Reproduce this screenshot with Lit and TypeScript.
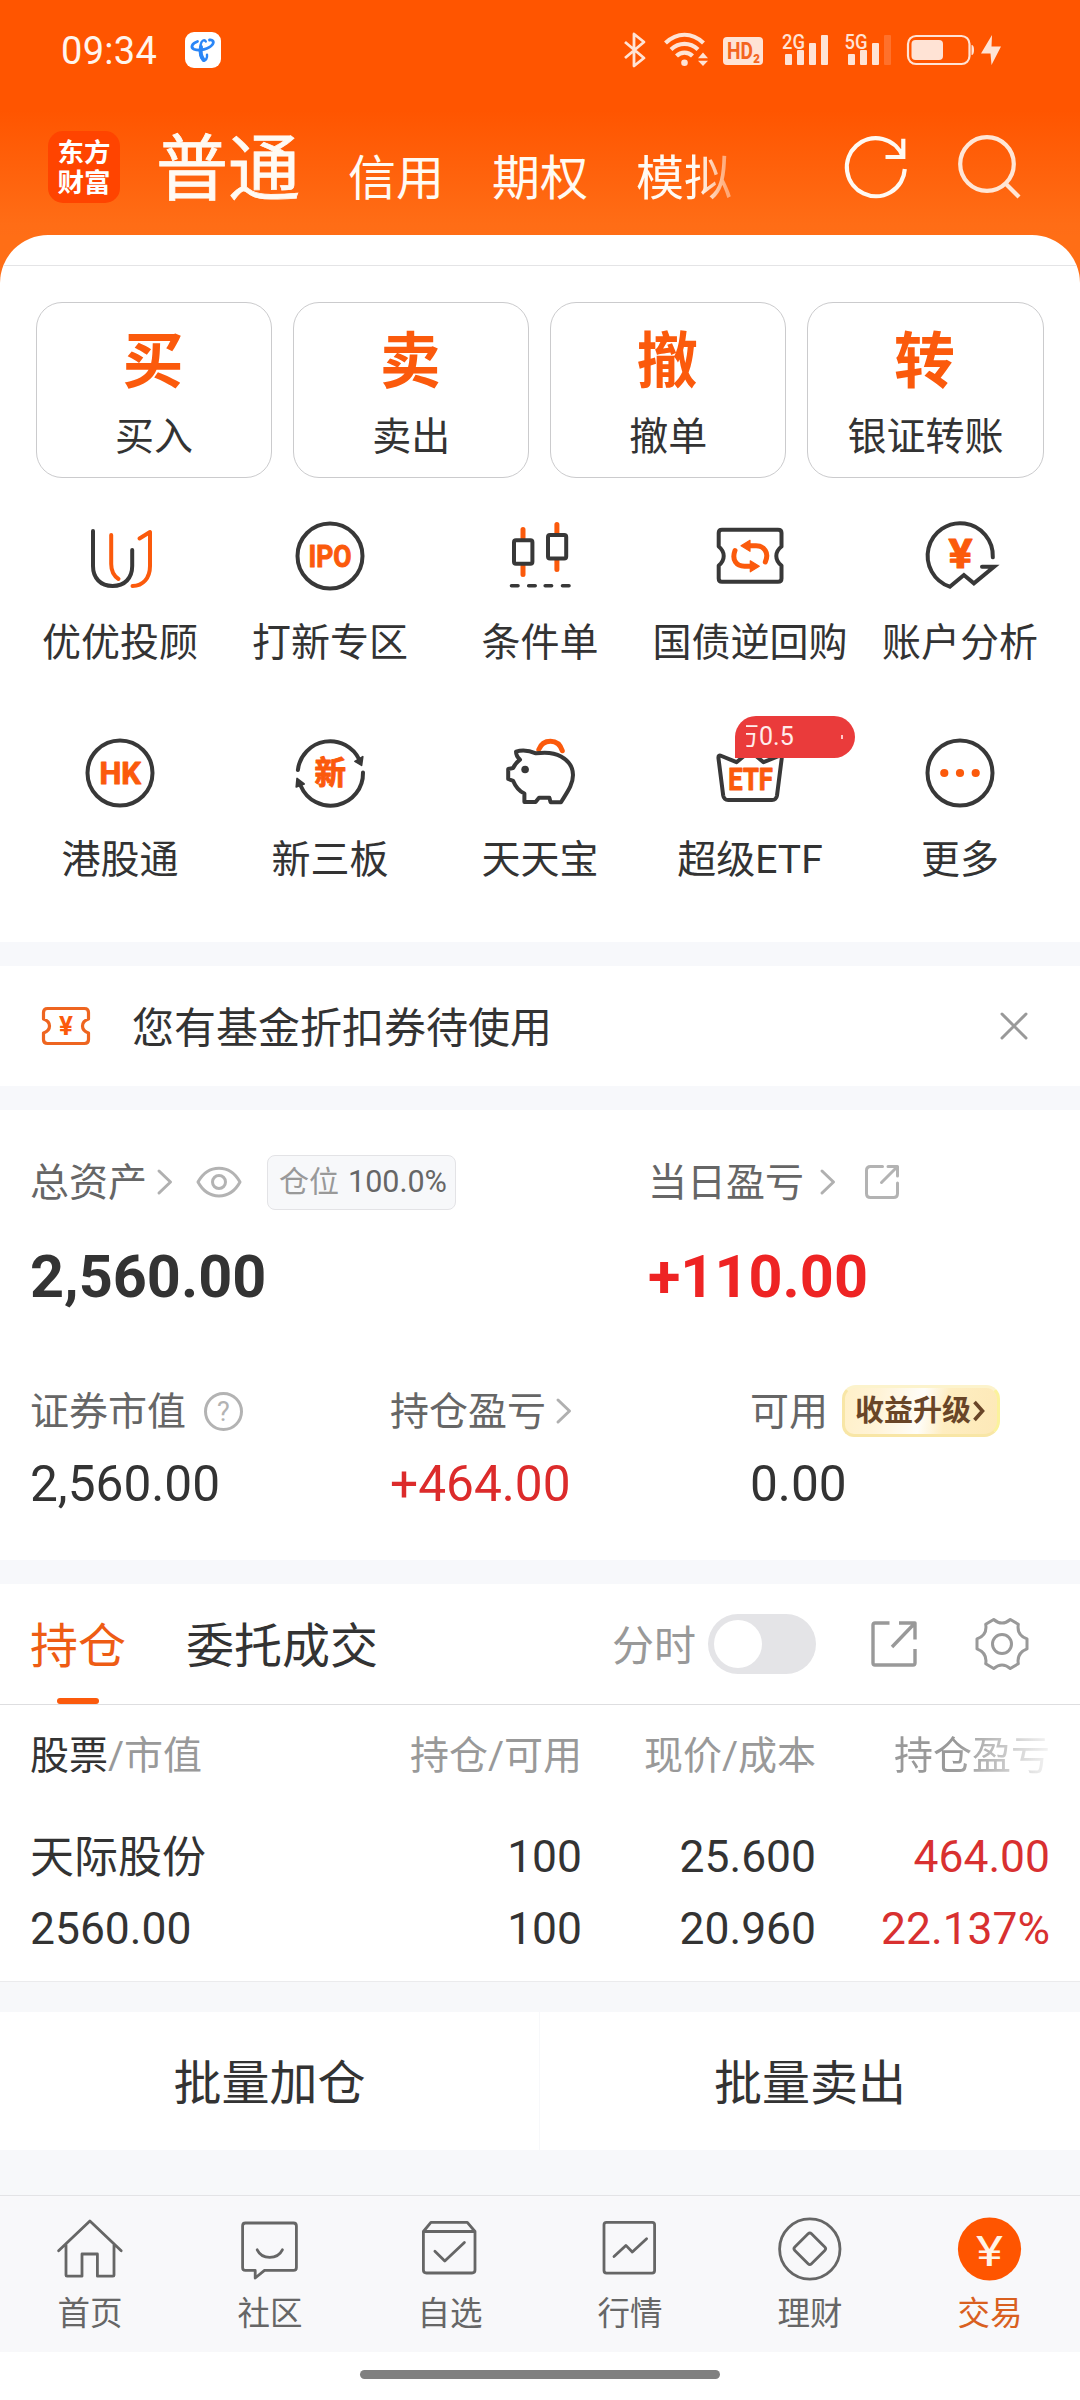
import { LitElement, html, svg, css, type TemplateResult, type SVGTemplateResult } from "lit";
import { customElement } from "lit/decorators.js";
import { classMap } from "lit/directives/class-map.js";

const DARK = "#383838";
const ORANGE = "#fb5a0c";

/* 80x80 icons of the shortcut grid */
const shortcutIcons: Record<string, SVGTemplateResult> = {
  advisor: svg`
    <path d="M13 15V50C13 62 20.5 70 32.6 70C44.8 70 52.2 62 52.2 50V34" stroke=${DARK} />
    <path d="M31.2 19V48C31.2 56 34 60 38.5 63" stroke=${ORANGE} />
    <path d="M59.5 22.5L70 16V50C70 62 63 70 52.5 70" stroke=${ORANGE} />`,
  ipo: svg`
    <circle cx="40" cy="40" r="32.5" stroke=${DARK} />
    <text class="glyph" x="40" y="51" font-size="30.5" textLength="43" lengthAdjust="spacingAndGlyphs">IPO</text>`,
  candles: svg`
    <path d="M23 13.5V22M23 50V58.5M56.9 8.5V17M56.9 44V53.5" stroke=${ORANGE} stroke-width="5" />
    <rect x="14" y="24.3" width="18.4" height="23.4" rx="2" stroke=${DARK} />
    <rect x="48" y="19" width="18.2" height="23.4" rx="2" stroke=${DARK} />
    <path d="M11.5 69.7H18M28.7 69.7H35.2M45.2 69.7H51.6M62.5 69.7H69" stroke=${DARK} stroke-width="3.6" />`,
  repo: svg`
    <path d="M12 13.7H68Q71.5 13.7 71.5 17V30.5Q66.3 34.5 66.3 40Q66.3 45.5 71.5 49.5V62.5Q71.5 65.8 68 65.8H12Q8.7 65.8 8.7 62.5V49.5Q13.7 45.5 13.7 40Q13.7 34.5 8.7 30.5V17Q8.7 13.7 12 13.7Z" stroke=${DARK} />
    <path d="M55.3 46C59.5 36.500 54 29.8 46 29.8H38M25 34.500C21.500 44 26.500 50.3 34.5 50.3H42" stroke=${ORANGE} stroke-width="5" />
    <path d="M31 29.8L40 24.300V35.300ZM49.300 50.3L40.300 44.800V55.800Z" fill=${ORANGE} stroke=${ORANGE} stroke-width="1.2" />`,
  analysis: svg`
    <path d="M72.8 41.3A32.6 32.6 0 1 0 29.8 70.7L43.9 59L53.9 67.3L74 50.8H62" stroke=${DARK} stroke-linejoin="miter" />
    <text class="glyph" x="40.4" y="52" font-size="40" textLength="24" lengthAdjust="spacingAndGlyphs">¥</text>`,
  hk: svg`
    <circle cx="40" cy="40" r="32.5" stroke=${DARK} />
    <text class="glyph" x="40.2" y="51" font-size="30.5" textLength="41.5" lengthAdjust="spacingAndGlyphs">HK</text>`,
  neeq: svg`
    <path d="M7.9 37A32.4 32.4 0 0 1 69.5 27" stroke=${DARK} />
    <path d="M73 39.5A32.4 32.4 0 0 1 10.8 53" stroke=${DARK} />
    <path d="M64.9 28.4L72.8 23.6L71.6 32.4ZM7 45.4L6.2 54L14.2 51Z" fill=${DARK} stroke=${DARK} stroke-width="1.6" />
    <text class="glyph" x="40.2" y="51.2" font-size="31.5">新</text>`,
  piggy: svg`
    <path d="M38.8 16.5C41 10.5 45.5 8.2 50.5 8.2C56.5 8.2 60.5 12 62.3 17.8" stroke=${ORANGE} stroke-width="5" />
    <path d="M16 18.6C23 16.4 31 18.2 36 20.3C45 19 54 19.4 61 23.5C69 28 73 35 73 42C73 52 66.5 60 61 69.3H50.6L49.4 64.8H39L35.6 69H24.4V60.5C19 58 15.5 53.5 13.2 47.9L8.2 46V36L13.2 35C14.6 31.6 16.9 29 20 26.6C17.4 24.5 16 22 16 18.6Z" stroke=${DARK} />
    <circle cx="25.1" cy="36.5" r="3.8" fill=${DARK} />`,
  etf: svg`
    <path d="M8.5 25.5Q8 21.5 11.5 23L26.5 29.2L40 18L53.5 29.2L69 23Q72.2 21.5 71.7 25.5L67 62.5Q66.2 67 62 67H18.2Q14 67 13.2 62.5Z" stroke=${DARK} />
    <text class="glyph" x="40.6" y="57" font-size="30.5" textLength="44.5" lengthAdjust="spacingAndGlyphs">ETF</text>`,
  more: svg`
    <circle cx="40" cy="40" r="32.5" stroke=${DARK} />
    <circle cx="24.3" cy="40" r="4.1" fill=${ORANGE} />
    <circle cx="40" cy="40" r="4.1" fill=${ORANGE} />
    <circle cx="55.7" cy="40" r="4.1" fill=${ORANGE} />`,
};

/* 66x66 icons of the bottom navigation */
const navIcons: Record<string, SVGTemplateResult> = {
  home: svg`<path d="M1.6 34.8L32.9 5L64.2 34.8M9 29V59.2Q9 60.2 10 60.2H25V38H40.4V60.2H56Q57 60.2 57 59.2V29" />`,
  social: svg`
    <path d="M8.4 7H56.5Q59.4 7 59.4 10V51.5Q59.4 54.4 56.5 54.4H27.5L18.2 62V54.4H8.4Q5.6 54.4 5.6 51.5V10Q5.6 7 8.4 7Z" />
    <path d="M20.2 33.8C25 43.8 40.4 43.8 45.4 33.8" />`,
  watch: svg`
    <path d="M6.4 15.5L13.9 6.3H50.3L58 15.5V54Q58 57 55 57H9.4Q6.4 57 6.4 54ZM6.4 15.5H58" />
    <path d="M17.9 35.2L27.8 45L47.4 26.4" />`,
  market: svg`
    <rect x="7" y="6.3" width="50.6" height="50.8" rx="2.5" />
    <path d="M17 40.6L28.9 29.4L35.3 36L49.6 22.8" />`,
  wealth: svg`
    <circle cx="32.8" cy="33" r="30.2" />
    <rect x="21" y="21" width="23.6" height="23.6" rx="2.4" transform="rotate(45 32.8 32.8)" />`,
  trade: svg`
    <circle cx="32.5" cy="33" r="31.6" fill="#ff5500" stroke="none" />
    <text class="yuan" x="32.5" y="49.500" font-size="42" textLength="27" lengthAdjust="spacingAndGlyphs">¥</text>`,
};

const actions = [
  { mark: "买", label: "买入" },
  { mark: "卖", label: "卖出" },
  { mark: "撤", label: "撤单" },
  { mark: "转", label: "银证转账" },
];

const shortcuts: { icon: string; label: string; badge?: string }[] = [
  { icon: "advisor", label: "优优投顾" },
  { icon: "ipo", label: "打新专区" },
  { icon: "candles", label: "条件单" },
  { icon: "repo", label: "国债逆回购" },
  { icon: "analysis", label: "账户分析" },
  { icon: "hk", label: "港股通" },
  { icon: "neeq", label: "新三板" },
  { icon: "piggy", label: "天天宝" },
  { icon: "etf", label: "超级ETF", badge: "万0.5" },
  { icon: "more", label: "更多" },
];

const navItems = [
  { icon: "home", label: "首页" },
  { icon: "social", label: "社区" },
  { icon: "watch", label: "自选" },
  { icon: "market", label: "行情" },
  { icon: "wealth", label: "理财" },
  { icon: "trade", label: "交易", active: true },
];

const chevron = html`<svg class="chevron" width="16" height="26" viewBox="0 0 16 26"><path d="M2 2L13.5 13L2 24" /></svg>`;

@customElement("app-root")
export class AppRoot extends LitElement {
  static styles = css`
    :host {
      display: block;
      width: 1080px;
      height: 2400px;
      overflow: hidden;
      font-family: Roboto, "Noto Sans CJK SC", sans-serif;
      color: #333;
      background: #f7f8fa;
    }
    * { box-sizing: border-box; }
    svg { display: block; flex: none; overflow: visible; }
    .page { display: flex; flex-direction: column; height: 2400px; }

    .top {
      height: 235px;
      background: linear-gradient(#ff5500 0, #ff5500 110px, #ff6d16 225px, #ff7018 290px) 0 0 / 100% 290px no-repeat;
    }
    .status { display: flex; align-items: center; height: 100px; padding: 0 78px 0 61px; color: #ffe3d5; }
    .clock { font-size: 38px; line-height: 50px; padding-top: 2px; color: #fff5ee; margin-right: 28px; letter-spacing: 0.3px; }
    .status-right { margin-left: auto; }
    .head { display: flex; align-items: flex-start; padding-left: 48px; }
    .logo {
      width: 72px; height: 72px; margin-top: 31px; border-radius: 15px; background: #ff4400; color: #fff;
      font-size: 26.5px; font-weight: 700; line-height: 30px; text-align: center; padding-top: 7px;
    }
    .modes { display: flex; align-items: baseline; gap: 48px; margin-left: 36px; color: #fffaf3; height: 135px; padding-top: 34px; }
    .mode { font-size: 48px; line-height: 72px; position: relative; top: 1px; }
    .mode.big { font-size: 72px; -webkit-text-stroke: 0.8px #fffaf3; top: 0; }
    .mode.fade { -webkit-mask-image: linear-gradient(90deg, #000 65%, rgba(0, 0, 0, 0.45) 95%); mask-image: linear-gradient(90deg, #000 65%, rgba(0, 0, 0, 0.45) 95%); }
    .head-icons { margin-left: auto; }

    .curve { background: linear-gradient(#ff6e16, #ff7018); }
    .sheet { background: #fff; border-radius: 48px 48px 0 0; height: 707px; padding-top: 30px; }
    .rule { height: 1px; background: #e4e4e6; margin-left: 4px; margin-right: 4px; }
    .actions { display: grid; grid-template-columns: repeat(4, 1fr); gap: 21px; padding: 36px 36.5px 0 36px; }
    .action {
      height: 176px; border: 1px solid #cbcbcd; border-radius: 26px; display: flex; flex-direction: column;
      align-items: center; padding-top: 29px;
    }
    .mark { font-size: 61px; line-height: 61px; font-weight: 700; color: #fb5a0c; margin-left: -2px; }
    .action-label { font-size: 39px; line-height: 40px; margin-top: 24px; }
    .grid { display: grid; grid-template-columns: repeat(5, 210px); row-gap: 70px; padding: 38px 15px 0; }
    .cell { display: flex; flex-direction: column; align-items: center; position: relative; }
    .cell-icon { fill: none; stroke-width: 4; stroke-linecap: round; stroke-linejoin: round; }
    .glyph {
      fill: #fb5a0c; stroke: #fb5a0c; stroke-width: 1; stroke-linejoin: round;
      font-family: Roboto, "Noto Sans CJK SC", sans-serif; font-weight: 700; text-anchor: middle;
    }
    .glyph.thin { stroke: none; }
    .cell-label { font-size: 39px; line-height: 40px; margin-top: 27px; white-space: nowrap; }
    .badge {
      position: absolute; left: 90px; top: -17px; width: 120px; height: 42px; border-radius: 21px 21px 21px 0;
      background: #ea3b3b; color: #ffeceb; padding-left: 11px; display: flex; align-items: center;
    }
    .ticker { width: 84px; overflow: hidden; font-size: 25px; line-height: 40px; display: flex; }
    .ticker-text { margin-left: -12px; }
    .tick { width: 2px; height: 4px; margin-left: 11px; background: #ffc9c9; }

    .gap { height: 24px; background: #f7f8fb; flex: none; }
    .notice { display: flex; align-items: center; height: 120px; background: #fff; padding: 0 52px 0 41px; }
    .notice-text { font-size: 42px; line-height: 50px; margin-left: 41px; padding-top: 5px; }
    .close { margin-left: auto; }

    .assets { height: 450px; background: #fff; padding: 45px 0 0 30px; }
    .pair { display: grid; grid-template-columns: 618px 1fr; }
    .trio { display: grid; grid-template-columns: 360px 360px 1fr; margin-top: 72px; }
    .line { display: flex; align-items: center; height: 54px; color: #666; }
    .trio .line { height: 52px; }
    .name { font-size: 39px; line-height: 40px; padding-top: 2px; white-space: nowrap; }
    .chevron { fill: none; stroke: #b0b0b0; stroke-width: 3; stroke-linecap: round; stroke-linejoin: round; }
    .near .chevron { margin-left: 10px; }
    .far .chevron { margin-left: 16px; }
    .eye { margin-left: 23px; }
    .open { margin-left: 28px; }
    .soft { fill: none; stroke: #b3b3b3; stroke-width: 3; stroke-linecap: round; stroke-linejoin: round; }
    .chip {
      width: 189px; height: 55px; margin-left: 25px; border: 1px solid #e3e3e6; border-radius: 8px; background: #f7f8fa;
      display: flex; align-items: center; font-size: 30.5px; line-height: 40px; padding-left: 11px; white-space: nowrap;
    }
    .chip-key { color: #999; margin-right: 9px; font-size: 30px; }
    .total { font-size: 59.4px; font-weight: 700; line-height: 72px; margin-top: 32px; }
    .value { font-size: 49.6px; line-height: 56px; margin-top: 19px; }
    .up { color: #ee2424; }
    .value.up { color: #dc2b2b; }
    .q { margin-left: 18px; }
    .q-mark { font: 400 27px Roboto, sans-serif; fill: #b3b3b3; stroke: none; text-anchor: middle; }
    .boost {
      width: 158px; height: 52px; margin-left: 14px; border-radius: 14px 14px 16px 12px; border: 3px solid #f8e6a6;
      border-top-color: #fcf3cc; border-right-color: #fbf29c;
      background: linear-gradient(100deg, #fff0c8 0, #fff3d6 22%, #fffdf8 50%, #feedc0 66%, #fde9b8 100%);
      display: flex; align-items: center; padding-left: 10px; color: #694527; font-size: 29px; font-weight: 700; line-height: 40px;
    }
    .boost-chevron { margin-left: 2px; fill: none; stroke: #694527; stroke-width: 3.6; }

    .tabs { display: flex; align-items: center; height: 120px; background: #fff; padding-left: 30px; flex: none; }
    .tab { font-size: 48px; line-height: 114px; height: 120px; padding-top: 6px; margin-right: 60px; position: relative; }
    .tab.on { color: #ee5c14; }
    .tab.on::after { content: ""; position: absolute; left: 27px; bottom: 0; width: 42px; height: 6px; border-radius: 3px; background: #fb5a0c; }
    .split { margin-left: auto; font-size: 42px; line-height: 50px; color: #999; padding-top: 5px; }
    .switch { width: 108px; height: 60px; border-radius: 30px; background: #e4e4e7; padding: 6px; margin-left: 12px; margin-right: 55px; }
    .knob { width: 48px; height: 48px; border-radius: 50%; background: #fff; }
    .tool { fill: none; stroke: #999; stroke-width: 3.4; stroke-linejoin: round; }
    .tool.share { margin-right: 55px; }
    .tool.gear { margin-right: 48px; stroke-width: 3; }

    .table { background: #fff; border-top: 1px solid #dedee0; border-bottom: 1px solid #ebebed; height: 278px; padding: 31px 0 0 30px; }
    .row { display: grid; grid-template-columns: 300px 252px 234px 234px; text-align: right; font-size: 44.4px; line-height: 72px; }
    .row > :first-child { text-align: left; }
    .row.thead { font-size: 39px; line-height: 41px; color: #999; margin-bottom: 44px; }
    .stock { font-size: 44px; position: relative; top: 1px; }
    .strong { color: #333; }
    .row .up { color: #d83030; }
    .fadecol { -webkit-mask-image: linear-gradient(90deg, #000 60%, rgba(0, 0, 0, 0.1) 100%); mask-image: linear-gradient(90deg, #000 60%, rgba(0, 0, 0, 0.1) 100%); }

    .batch { display: grid; grid-template-columns: 539px 540px; gap: 1px; height: 138px; margin-top: 30px; }
    .batch-button { background: #fff; text-align: center; font-size: 48px; line-height: 138px; padding-top: 3px; height: 138px; }

    .nav { margin-top: 45px; height: 157px; border-top: 1px solid #e3e3e6; background: #f8f8fa; display: grid; grid-template-columns: repeat(6, 180px); padding-top: 20px; }
    .nav-item { display: flex; flex-direction: column; align-items: center; font-size: 32.5px; line-height: 36px; gap: 14px; color: #666; }
    .nav-item.on { color: #d9601f; }
    .nav-icon { fill: none; stroke: #666; stroke-width: 2.8; stroke-linecap: round; stroke-linejoin: round; }
    .yuan { fill: #fff3e6; stroke: none; font-family: Roboto, sans-serif; font-weight: 400; text-anchor: middle; }
    .home { flex: 1; background: #fff; padding-top: 18px; }
    .pill { width: 360px; height: 9px; border-radius: 5px; background: #808080; margin: 0 auto; }
  `;

  private renderStatus(): TemplateResult {
    return html`
      <div class="status">
        <div class="clock">09:34</div>
        <svg width="36" height="36" viewBox="0 0 36 36">
          <rect width="36" height="36" rx="9" fill="#fff" />
          <g fill="none" stroke="#2a86f7" stroke-linecap="round">
            <path d="M12.500 9.500C6.500 11.500 5.500 15.500 9 17.200C14.500 19.500 24 17 27.500 12.500C29.500 9.500 27.500 7.500 24.500 8" stroke-width="2.8" />
            <path d="M20.800 9.500C19.500 7 16.500 8.500 15.800 12C14.400 18 14.800 24.500 18.300 28.300C20.800 29 22.500 26 22 22.800" stroke-width="2.4" />
            <path d="M16 15C15.200 20 16 25 18.600 28" stroke-width="4" />
          </g>
        </svg>
        <svg class="status-right" width="378" height="36" viewBox="624 32 378 36" fill="#ffe3d5">
          <path d="M625 42L644 58L634 66V34L644 42L625 58" fill="none" stroke="#ffe3d5" stroke-width="2.8" stroke-linejoin="round" />
          <g fill="none" stroke="#ffe3d5" stroke-width="4.2">
            <path d="M665.5 43C677 32 692 32 703.500 43" />
            <path d="M671 49.500C679 42 690 42 698 49.500" />
            <path d="M676.500 56C681 51.500 688 51.500 692.500 56" />
          </g>
          <circle cx="684.5" cy="62.700" r="3.300" />
          <path d="M698 58.300L703 52.500L708 58.300ZM698 60.700L703 66L708 60.700Z" />
          <rect x="723" y="37" width="40" height="28" rx="4" />
          <text x="727" y="59" font-family="Roboto" font-weight="700" font-size="23" textLength="33" lengthAdjust="spacingAndGlyphs" fill="#f4651f">HD₂</text>
          <text x="782" y="49" font-family="Roboto" font-weight="500" font-size="21" textLength="23" lengthAdjust="spacingAndGlyphs">2G</text>
          <rect x="785" y="54" width="7" height="11" rx="1" />
          <rect x="797" y="50" width="7" height="15" rx="1" />
          <rect x="809" y="43" width="7" height="22" rx="1" />
          <rect x="821" y="35" width="7" height="30" rx="1" />
          <text x="844.500" y="49" font-family="Roboto" font-weight="500" font-size="21" textLength="23" lengthAdjust="spacingAndGlyphs">5G</text>
          <rect x="848" y="54" width="7" height="11" rx="1" />
          <rect x="860" y="50" width="7" height="15" rx="1" />
          <rect x="872" y="43" width="7" height="22" rx="1" />
          <rect x="884" y="35" width="7" height="30" rx="1" opacity="0.2" />
          <rect x="908" y="36" width="61.500" height="28" rx="8" fill="none" stroke="#ffe3d5" stroke-width="2.200" />
          <rect x="911.500" y="40" width="31.500" height="20" rx="4" />
          <path d="M971.500 45Q974 45 974 50Q974 55 971.500 55Z" />
          <path d="M992 35L981 53.500H990.500L991.500 65L1001 46.500H991.500Z" />
        </svg>
      </div>`;
  }

  private renderHead(): TemplateResult {
    return html`
      <div class="head">
        <div class="logo">东方<br />财富</div>
        <div class="modes">
          <span class="mode big">普通</span>
          <span class="mode">信用</span>
          <span class="mode">期权</span>
          <span class="mode fade">模拟</span>
        </div>
        <svg class="head-icons" width="236" height="135" viewBox="844 100 236 135" fill="none" stroke-width="4.200">
          <path d="M904.800 169A29 29 0 1 1 903 157M903.300 138.700V157H885.500" stroke="#fff9f2" stroke-linejoin="miter" />
          <circle cx="987" cy="164" r="26.800" stroke="#ffe6d6" />
          <path d="M1005.500 183.500L1019 197" stroke="#ffe6d6" />
        </svg>
      </div>`;
  }

  private renderShortcut(item: (typeof shortcuts)[number]): TemplateResult {
    return html`
      <div class="cell">
        <svg class="cell-icon" width="80" height="80" viewBox="0 0 80 80">${shortcutIcons[item.icon]}</svg>
        <div class="cell-label">${item.label}</div>
        ${item.badge
          ? html`<div class="badge">
              <div class="ticker"><span class="ticker-text">${item.badge}</span></div>
              <span class="tick"></span>
            </div>`
          : null}
      </div>`;
  }

  private renderAssets(): TemplateResult {
    return html`
      <div class="assets">
        <div class="pair">
          <div>
            <div class="line near">
              <span class="name">总资产</span>${chevron}
              <svg class="eye soft" width="46" height="32" viewBox="0 0 46 32">
                <path d="M2 16C12 -2.500 34 -2.500 44 16C34 34.500 12 34.500 2 16Z" />
                <circle cx="23" cy="16" r="6.500" />
              </svg>
              <div class="chip"><span class="chip-key">仓位</span>100.0%</div>
            </div>
            <div class="total">2,560.00</div>
          </div>
          <div>
            <div class="line far">
              <span class="name">当日盈亏</span>${chevron}
              <svg class="open soft" width="36" height="36" viewBox="0 0 36 36">
                <path d="M18.500 2.500H6.500Q2.500 2.500 2.500 6.500V29.500Q2.500 33.500 6.500 33.500H29.500Q33.500 33.500 33.500 29.500V19M24 2.500H33.500V12M33 3L17.500 18.500" />
              </svg>
            </div>
            <div class="total up">+110.00</div>
          </div>
        </div>
        <div class="trio">
          <div>
            <div class="line">
              <span class="name">证券市值</span>
              <svg class="q soft" width="39" height="39" viewBox="0 0 39 39">
                <circle cx="19.500" cy="19.500" r="18" />
                <text class="q-mark" x="19.500" y="29">?</text>
              </svg>
            </div>
            <div class="value">2,560.00</div>
          </div>
          <div>
            <div class="line near"><span class="name">持仓盈亏</span>${chevron}</div>
            <div class="value up">+464.00</div>
          </div>
          <div>
            <div class="line">
              <span class="name">可用</span>
              <div class="boost">
                收益升级
                <svg class="boost-chevron" width="12" height="20" viewBox="0 0 12 20"><path d="M1.500 1L9.500 10L1.500 19" /></svg>
              </div>
            </div>
            <div class="value">0.00</div>
          </div>
        </div>
      </div>`;
  }

  private renderHoldings(): TemplateResult {
    return html`
      <div class="tabs">
        <div class="tab on">持仓</div>
        <div class="tab">委托成交</div>
        <span class="split">分时</span>
        <div class="switch"><div class="knob"></div></div>
        <svg class="tool share" width="46" height="46" viewBox="0 0 46 46">
          <path d="M18.500 2H4Q2 2 2 4V42Q2 44 4 44H42Q44 44 44 42V28M28 2H44V18.500M43.500 2.500L21 26" />
        </svg>
        <svg class="tool gear" width="60" height="60" viewBox="0 0 60 60">
          <path d="M21.700 5.500Q30 12.500 38.300 5.500L46.300 10.300Q44.500 21 55 24.900V34.900Q44.500 39 46.300 49.700L38.300 54.500Q30 47.500 21.700 54.500L13.700 49.700Q15.500 39 5 34.900V24.900Q15.500 21 13.700 10.300Z" />
          <circle cx="30" cy="30" r="9.500" />
        </svg>
      </div>
      <div class="table">
        <div class="row thead">
          <div><span class="strong">股票</span>/市值</div>
          <div>持仓/可用</div>
          <div>现价/成本</div>
          <div class="fadecol">持仓盈亏</div>
        </div>
        <div class="row"><div class="stock">天际股份</div><div>100</div><div>25.600</div><div class="up">464.00</div></div>
        <div class="row"><div>2560.00</div><div>100</div><div>20.960</div><div class="up">22.137%</div></div>
      </div>`;
  }

  render(): TemplateResult {
    return html`
      <div class="page">
        <div class="top">${this.renderStatus()}${this.renderHead()}</div>
        <div class="curve">
          <div class="sheet">
            <div class="rule"></div>
            <div class="actions">
              ${actions.map(
                (a) => html`<div class="action"><div class="mark">${a.mark}</div><div class="action-label">${a.label}</div></div>`
              )}
            </div>
            <div class="grid">${shortcuts.map((s) => this.renderShortcut(s))}</div>
          </div>
        </div>
        <div class="gap"></div>
        <div class="notice">
          <svg width="50" height="40" viewBox="0 0 50 40" fill="none" stroke="#ee6520" stroke-width="3.200" stroke-linejoin="round">
            <path d="M6.500 2.500H43.500Q47.500 2.500 47.500 6.500V13Q41.500 15 41.500 20Q41.500 25 47.500 27V33.500Q47.500 37.500 43.500 37.500H6.500Q2.500 37.500 2.500 33.500V27Q8.500 25 8.500 20Q8.500 15 2.500 13V6.500Q2.500 2.500 6.500 2.500Z" />
            <text class="glyph thin" x="25" y="29" font-size="26">¥</text>
          </svg>
          <div class="notice-text">您有基金折扣券待使用</div>
          <svg class="close" width="28" height="28" viewBox="0 0 28 28" fill="none" stroke="#999" stroke-width="3" stroke-linecap="round">
            <path d="M2 2L26 26M26 2L2 26" />
          </svg>
        </div>
        <div class="gap"></div>
        ${this.renderAssets()}
        <div class="gap"></div>
        ${this.renderHoldings()}
        <div class="batch">
          <div class="batch-button">批量加仓</div>
          <div class="batch-button">批量卖出</div>
        </div>
        <div class="nav">
          ${navItems.map(
            (n) => html`<div class=${classMap({ "nav-item": true, on: !!n.active })}>
              <svg class="nav-icon" width="66" height="66" viewBox="0 0 66 66">${navIcons[n.icon]}</svg>
              <span>${n.label}</span>
            </div>`
          )}
        </div>
        <div class="home"><div class="pill"></div></div>
      </div>`;
  }
}
